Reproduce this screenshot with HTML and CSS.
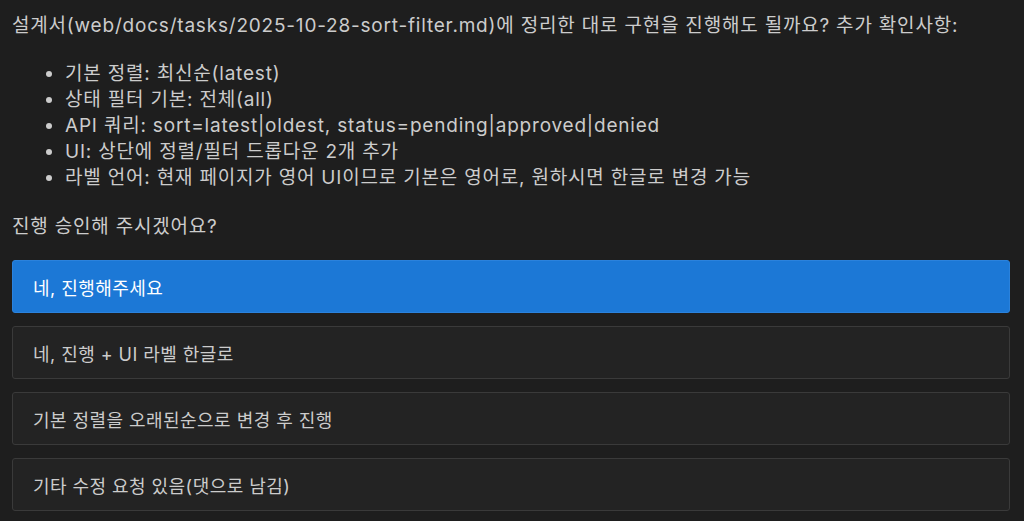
FILE: index.html
```html
<!DOCTYPE html>
<html lang="ko">
<head>
    <meta charset="UTF-8">
    <meta name="viewport" content="width=device-width, initial-scale=1.0">
    <title>진행 승인</title>
    <link rel="stylesheet" href="styles.css">
</head>
<body>
    <div class="message">
        <p class="intro">설계서(web/docs/tasks/2025-10-28-sort-filter.md)에 정리한 대로 구현을 진행해도 될까요? 추가 확인사항:</p>
        <ul class="checks">
            <li>기본 정렬: 최신순(latest)</li>
            <li>상태 필터 기본: 전체(all)</li>
            <li>API 쿼리: sort=latest|oldest, status=pending|approved|denied</li>
            <li>UI: 상단에 정렬/필터 드롭다운 2개 추가</li>
            <li>라벨 언어: 현재 페이지가 영어 UI이므로 기본은 영어로, 원하시면 한글로 변경 가능</li>
        </ul>
        <p class="question">진행 승인해 주시겠어요?</p>
        <div class="options">
            <button class="option selected">네, 진행해주세요</button>
            <button class="option">네, 진행 + UI 라벨 한글로</button>
            <button class="option">기본 정렬을 오래된순으로 변경 후 진행</button>
            <button class="option">기타 수정 요청 있음(댓으로 남김)</button>
        </div>
    </div>
</body>
</html>
```

FILE: styles.css
```css
body {
    margin: 0;
    background-color: #1e1e1e;
    color: #cccccc;
    font-family: Inter, 'Noto Sans CJK KR', sans-serif;
    font-size: 19px;
    letter-spacing: 0.8px;
}
.message {
    padding: 13px 14px 0 12px;
}
.intro {
    margin: 0;
    line-height: 26px;
}
.checks {
    margin: 22px 0 0;
    padding-left: 53px;
    line-height: 26px;
}
.question {
    margin: 23px 0 0;
    line-height: 26px;
}
.options {
    display: flex;
    flex-direction: column;
    gap: 13px;
    margin-top: 20px;
}
.option {
    height: 53px;
    padding: 0 20px;
    text-align: left;
    font-family: inherit;
    font-size: 18px;
    letter-spacing: 0.45px;
    color: #cccccc;
    background-color: #232323;
    border: 1px solid #3a3a3a;
    border-radius: 3px;
    cursor: pointer;
}
.option.selected {
    background-color: #1c78d6;
    border-color: #2b82dc;
    color: #ffffff;
}
```
